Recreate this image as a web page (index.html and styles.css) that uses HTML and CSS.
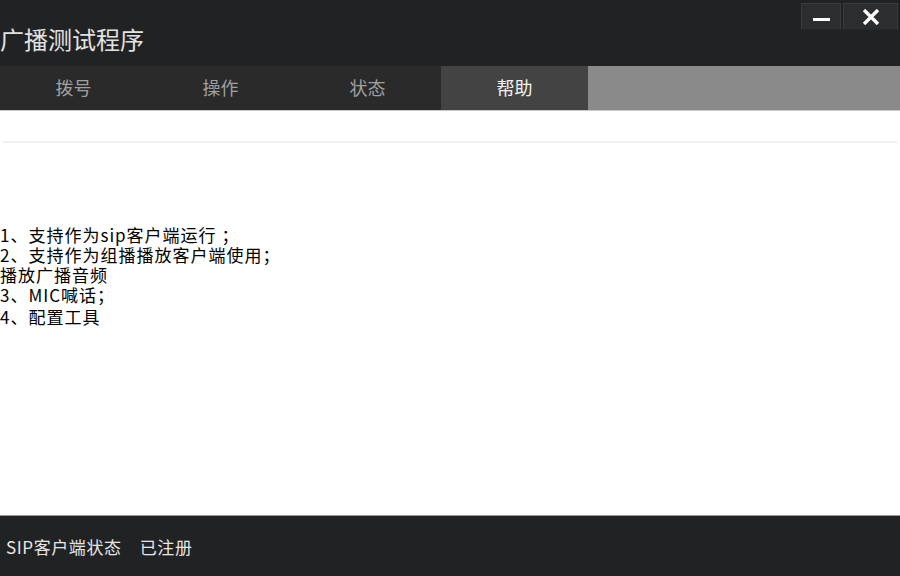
FILE: index.html
```html
<!DOCTYPE html>
<html lang="zh-CN">
<head>
    <meta charset="UTF-8">
    <title>广播测试程序</title>
    <link rel="stylesheet" href="styles.css">
</head>
<body>
    <div class="window">
        <header class="title-bar">
            <div class="title">广播测试程序</div>
            <div class="window-buttons">
                <button class="win-btn min-btn"><span class="min-bar"></span></button>
                <button class="win-btn close-btn">
                    <svg width="18" height="16" viewBox="0 0 18 16">
                        <path d="M2 1 L16 15 M16 1 L2 15" stroke="#fff" stroke-width="3.4" fill="none"/>
                    </svg>
                </button>
            </div>
        </header>

        <nav class="tab-bar">
            <div class="tab">拨号</div>
            <div class="tab">操作</div>
            <div class="tab">状态</div>
            <div class="tab active">帮助</div>
            <div class="tab-fill"></div>
        </nav>

        <main class="content">
            <div class="divider"></div>
            <div class="help-text">
                <div>1、支持作为sip客户端运行 ；</div>
                <div>2、支持作为组播播放客户端使用；</div>
                <div>播放广播音频</div>
                <div>3、MIC喊话；</div>
                <div class="last">4、配置工具</div>
            </div>
        </main>

        <footer class="status-bar">
            <span>SIP客户端状态</span>
            <span class="status-value">已注册</span>
        </footer>
    </div>
</body>
</html>
```

FILE: styles.css
```css
body {
    margin: 0;
    font-family: "Noto Sans CJK SC", "Noto Sans", sans-serif;
    background-color: #fff;
}

.window {
    display: flex;
    flex-direction: column;
    width: 900px;
    height: 576px;
    overflow: hidden;
}

.title-bar {
    height: 66px;
    background-color: #212224;
    display: flex;
    justify-content: space-between;
    flex-shrink: 0;
}

.title {
    font-size: 24px;
    color: #e2e2e2;
    padding-top: 23px;
    line-height: 32px;
}

.window-buttons {
    display: flex;
    gap: 2px;
    padding-top: 3px;
    padding-right: 2px;
    align-items: flex-start;
}

.win-btn {
    height: 27px;
    background-color: #2c2d2f;
    border: 1px solid #3a3b3d;
    border-bottom-color: #262729;
    display: flex;
    align-items: center;
    justify-content: center;
    padding: 0;
}

.min-btn {
    width: 40px;
}

.min-bar {
    display: block;
    width: 17px;
    height: 3px;
    background-color: #fff;
    margin-top: 6px;
}

.close-btn {
    width: 55px;
}

.tab-bar {
    height: 44px;
    display: flex;
    background-color: #2a2a2a;
    border-bottom: 1px solid #c8c8c8;
    flex-shrink: 0;
}

.tab {
    width: 147px;
    text-align: center;
    font-size: 18px;
    line-height: 42px;
    color: #a0a0a0;
}

.tab.active {
    background-color: #434343;
    color: #f2f2f2;
}

.tab-fill {
    flex: 1;
    background-color: #8a8a8a;
}

.content {
    flex: 1;
    padding-top: 30px;
}

.divider {
    height: 2px;
    margin: 0 3px;
    background-color: #f0f0f0;
}

.help-text {
    margin-top: 82px;
    font-size: 17px;
    letter-spacing: 1px;
    line-height: 20px;
    color: #000;
}

.help-text .last {
    margin-top: 2px;
}

.status-bar {
    height: 60px;
    background-color: #212224;
    border-top: 1px solid #9a9a9a;
    display: flex;
    align-items: center;
    gap: 18px;
    padding-left: 6px;
    font-size: 17px;
    letter-spacing: 0.6px;
    color: #e6e6e6;
    flex-shrink: 0;
}
```
